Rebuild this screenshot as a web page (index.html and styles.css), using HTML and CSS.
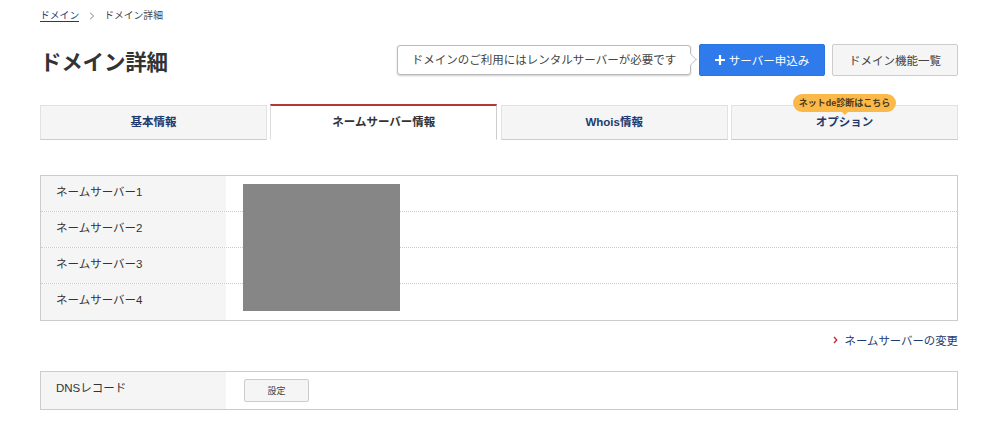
FILE: index.html
```html
<!DOCTYPE html>
<html lang="ja">
<head>
  <meta charset="UTF-8">
  <title>ドメイン詳細</title>
  <link rel="stylesheet" href="styles.css">
</head>
<body>
  <div class="page">
    <div class="breadcrumb">
      <a href="#">ドメイン</a>
      <svg class="crumb-sep" width="6" height="8" viewBox="0 0 6 8"><path d="M1 .8 4.6 4 1 7.2" fill="none" stroke="#888" stroke-width="1"/></svg>
      <span>ドメイン詳細</span>
    </div>

    <div class="title-row">
      <h1>ドメイン詳細</h1>
      <div class="actions">
        <div class="hint">ドメインのご利用にはレンタルサーバーが必要です</div>
        <a href="#" class="btn btn-primary">
          <svg width="10" height="10" viewBox="0 0 10 10"><path d="M5 0v10M0 5h10" stroke="#fff" stroke-width="2.2"/></svg>
          サーバー申込み
        </a>
        <a href="#" class="btn">ドメイン機能一覧</a>
      </div>
    </div>

    <ul class="tabs">
      <li><a href="#">基本情報</a></li>
      <li class="active"><a href="#">ネームサーバー情報</a></li>
      <li><a href="#">Whois情報</a></li>
      <li>
        <span class="badge">ネットde診断はこちら</span>
        <a href="#">オプション</a>
      </li>
    </ul>

    <div class="info-table ns-table">
      <div class="row"><div class="label">ネームサーバー1</div><div class="value"></div></div>
      <div class="row"><div class="label">ネームサーバー2</div><div class="value"></div></div>
      <div class="row"><div class="label">ネームサーバー3</div><div class="value"></div></div>
      <div class="row row-last"><div class="label">ネームサーバー4</div><div class="value"></div></div>
      <div class="redacted"></div>
    </div>

    <div class="more-link">
      <svg width="5" height="8" viewBox="0 0 5 8"><path d="M1 1 3.8 4 1 7" fill="none" stroke="#c0282d" stroke-width="1.3"/></svg>
      <a href="#">ネームサーバーの変更</a>
    </div>

    <div class="info-table dns-table">
      <div class="row row-last">
        <div class="label">DNSレコード</div>
        <div class="value"><a href="#" class="btn btn-small">設定</a></div>
      </div>
    </div>
  </div>
</body>
</html>
```

FILE: styles.css
```css
* {
  margin: 0;
  padding: 0;
  box-sizing: border-box;
  font-family: "Liberation Sans", "Noto Sans CJK JP", sans-serif;
}

body {
  background-color: #fff;
  color: #333;
}

a {
  text-decoration: none;
}

.page {
  padding: 9px 40px 0;
}

.breadcrumb {
  display: flex;
  align-items: center;
  height: 13px;
  font-size: 9.8px;
  line-height: 13px;
  color: #444;
}

.breadcrumb a {
  color: #1f3a6e;
  border-bottom: 1px solid #1f3a6e;
  line-height: 11px;
}

.crumb-sep {
  margin: 0 9.5px;
}

.title-row {
  display: flex;
  justify-content: space-between;
  align-items: center;
  margin-top: 22px;
  height: 32px;
}

h1 {
  font-size: 21.5px;
  font-weight: bold;
  letter-spacing: -0.2px;
  color: #333;
}

.actions {
  display: flex;
  align-items: center;
}

.hint {
  position: relative;
  width: 294px;
  height: 30px;
  margin-right: 8px;
  border: 1px solid #bbb;
  border-radius: 3px;
  background: #fff;
  box-shadow: 0 1px 2px rgba(0, 0, 0, 0.2);
  font-size: 11.5px;
  line-height: 28px;
  text-align: center;
  color: #444;
}

.hint::after {
  content: "";
  position: absolute;
  top: 9px;
  right: -5px;
  width: 8px;
  height: 8px;
  background: #fff;
  border-top: 1px solid #ccc;
  border-right: 1px solid #ccc;
  transform: rotate(45deg);
}

.btn {
  display: flex;
  align-items: center;
  justify-content: center;
  width: 126px;
  height: 32px;
  border: 1px solid #ccc;
  border-radius: 2px;
  background: #f5f5f5;
  font-size: 11.5px;
  color: #444;
}

.btn-primary {
  gap: 4px;
  margin-right: 7px;
  border-color: #2a74e0;
  background: #2f7bec;
  color: #fff;
}

.btn-small {
  width: 65px;
  height: 23px;
  font-size: 9px;
}

.tabs {
  display: grid;
  grid-template-columns: 227px 227px 227px 227px;
  justify-content: space-between;
  margin-top: 29px;
  list-style: none;
}

.tabs li {
  position: relative;
  height: 35px;
  border: 1px solid #e2e2e2;
  border-bottom: 1px solid #ccc;
  background: #f5f5f5;
}

.tabs a {
  display: block;
  font-size: 11.5px;
  font-weight: bold;
  line-height: 32px;
  text-align: center;
  color: #1f3a6e;
}

.tabs .active {
  height: 36px;
  margin-top: -1px;
  border-top: 2px solid #b03a3a;
  border-left: 1px solid #ddd;
  border-right: 1px solid #ccc;
  border-bottom: 1px solid #fff;
  background: #fff;
}

.tabs .active a {
  color: #333;
}

.badge {
  position: absolute;
  top: -12px;
  left: 61px;
  width: 103px;
  height: 18px;
  border-radius: 9px;
  background: #fbb94a;
  font-size: 9px;
  font-weight: bold;
  line-height: 18px;
  text-align: center;
  color: #4a3a1a;
}

.badge::after {
  content: "";
  position: absolute;
  left: 48px;
  bottom: -3px;
  border-top: 4px solid #fbb94a;
  border-left: 4px solid transparent;
  border-right: 4px solid transparent;
}

.info-table {
  position: relative;
  border: 1px solid #ccc;
}

.ns-table {
  margin-top: 35px;
}

.row {
  display: flex;
  height: 36px;
  border-bottom: 1px dotted #ccc;
}

.row-last {
  border-bottom: none;
}

.label {
  width: 185px;
  padding: 9px 0 0 15px;
  background: #f5f5f5;
  font-size: 11.5px;
  line-height: 14px;
  color: #333;
}

.value {
  flex: 1;
}

.redacted {
  position: absolute;
  top: 8px;
  left: 202px;
  width: 157px;
  height: 127px;
  background: #868686;
}

.more-link {
  display: flex;
  justify-content: flex-end;
  align-items: center;
  gap: 7px;
  margin-top: 11px;
  height: 15px;
  font-size: 11.4px;
}

.more-link a {
  color: #1f3a6e;
}

.dns-table {
  margin-top: 24px;
}

.dns-table .row {
  height: 37px;
}

.dns-table .label {
  padding-top: 9px;
}

.dns-table .value {
  padding: 7px 0 0 18px;
}
```
